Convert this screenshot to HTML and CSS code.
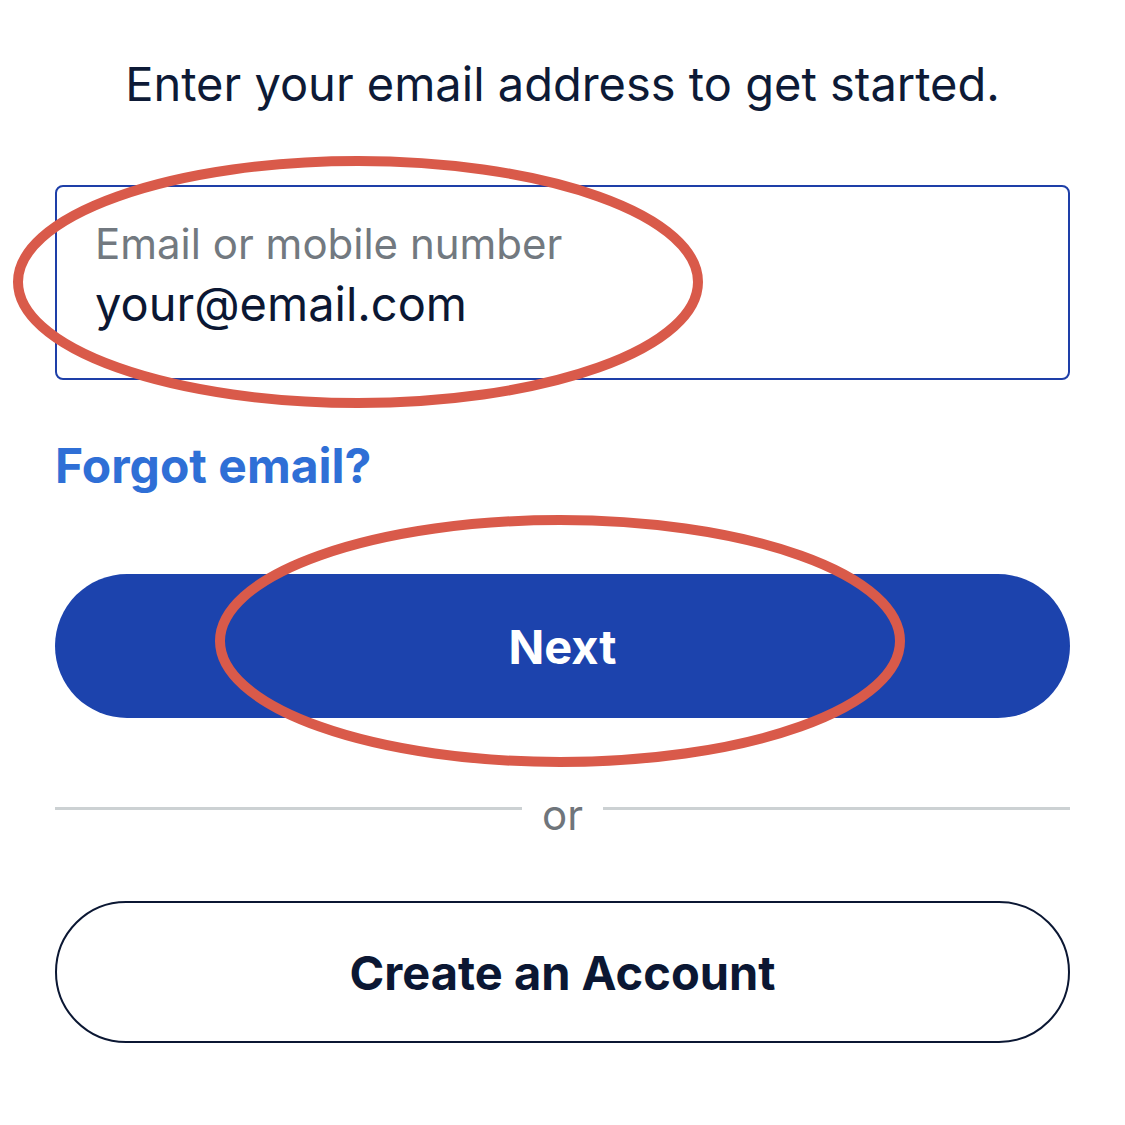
FILE: index.html
```html
<!DOCTYPE html>
<html>
<head>
<meta charset="utf-8">
<link rel="stylesheet" href="styles.css">
</head>
<body>
<div class="page">
  <h1 class="title">Enter your email address to get started.</h1>
  <div class="field">
    <div class="field-label">Email or mobile number</div>
    <div class="field-value">your@email.com</div>
  </div>
  <a class="forgot">Forgot email?</a>
  <div class="btn btn-primary">Next</div>
  <div class="divider"><span class="line"></span><span class="or">or</span><span class="line"></span></div>
  <div class="btn btn-outline">Create an Account</div>
</div>
<svg class="marks" width="1125" height="1125" viewBox="0 0 1125 1125">
  <ellipse cx="358" cy="282" rx="340" ry="121" fill="none" stroke="#d95a4a" stroke-width="10"/>
  <ellipse cx="560" cy="641" rx="340" ry="121" fill="none" stroke="#d95a4a" stroke-width="10"/>
</svg>
</body>
</html>
```
FILE: styles.css
```css
html, body { margin: 0; padding: 0; background: #fff; }
body { position: relative; width: 1125px; height: 1125px; overflow: hidden; }
.page {
  padding: 54px 55px 0 55px;
  display: flex;
  flex-direction: column;
  font-family: Inter, "Noto Sans", sans-serif;
}
.title {
  margin: 0;
  text-align: center;
  font-weight: 400;
  font-size: 47px;
  line-height: 60px;
  color: #0d1a36;
}
.field {
  margin-top: 71px;
  height: 195px;
  box-sizing: border-box;
  border: 2px solid #1e3fa8;
  border-radius: 8px;
  padding: 30px 38px 0 38px;
}
.field-label {
  font-size: 42px;
  line-height: 54px;
  color: #727980;
}
.field-value {
  margin-top: 4px;
  font-size: 47px;
  line-height: 58px;
  color: #0b1733;
}
.forgot {
  margin-top: 54px;
  font-weight: 700;
  font-size: 48px;
  line-height: 64px;
  color: #2f6fd6;
  align-self: flex-start;
}
.btn {
  box-sizing: border-box;
  display: flex;
  align-items: center;
  justify-content: center;
  border-radius: 999px;
  font-weight: 700;
  font-size: 47px;
}
.btn-primary {
  margin-top: 76px;
  height: 144px;
  background: #1c43ad;
  color: #fff;
}
.divider {
  margin-top: 70px;
  display: flex;
  align-items: center;
  gap: 20px;
  height: 54px;
}
.line { flex: 1; height: 3px; background: #ccd1d3; margin-top: -14px; }
.or {
  font-size: 42px;
  line-height: 54px;
  color: #6f757b;
}
.btn-outline {
  margin-top: 59px;
  height: 142px;
  border: 2.5px solid #0b1733;
  color: #0b1733;
}
.marks { position: absolute; left: 0; top: 0; pointer-events: none; }
```
